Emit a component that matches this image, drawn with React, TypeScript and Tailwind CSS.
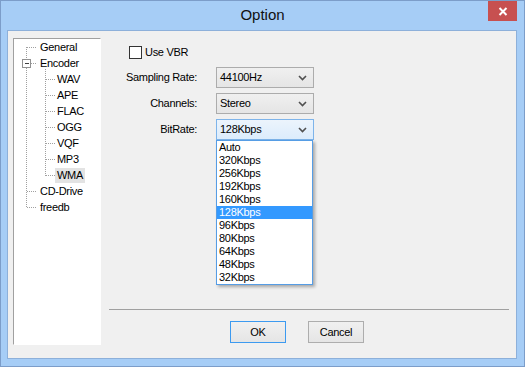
import { type ReactNode } from 'react';

const font = { fontFamily: '"Liberation Sans", Arial, sans-serif' };

type TreeRow = { label: string; level: 0 | 1; selected?: boolean };

const treeRows: TreeRow[] = [
  { label: 'General', level: 0 },
  { label: 'Encoder', level: 0 },
  { label: 'WAV', level: 1 },
  { label: 'APE', level: 1 },
  { label: 'FLAC', level: 1 },
  { label: 'OGG', level: 1 },
  { label: 'VQF', level: 1 },
  { label: 'MP3', level: 1 },
  { label: 'WMA', level: 1, selected: true },
  { label: 'CD-Drive', level: 0 },
  { label: 'freedb', level: 0 },
];

const bitRates = ['Auto', '320Kbps', '256Kbps', '192Kbps', '160Kbps', '128Kbps', '96Kbps', '80Kbps', '64Kbps', '48Kbps', '32Kbps'];

function TreeLines() {
  const dot = { stroke: '#a0a0a0', strokeDasharray: '1 1', shapeRendering: 'crispEdges' as const };
  const rootRows = [0, 9, 10];
  const childRows = [2, 3, 4, 5, 6, 7, 8];
  return (
    <svg className="pointer-events-none absolute left-0 top-0" width="86" height="200">
      <line x1="12.5" y1="8" x2="12.5" y2="20" {...dot} />
      <line x1="12.5" y1="29" x2="12.5" y2="169" {...dot} />
      {rootRows.map((r) => (
        <line key={r} x1="13" y1={r * 16 + 8.5} x2="22" y2={r * 16 + 8.5} {...dot} />
      ))}
      <line x1="17" y1="24.5" x2="22" y2="24.5" {...dot} />
      <rect x="8.5" y="20.5" width="8" height="8" fill="white" stroke="#919191" shapeRendering="crispEdges" />
      <line x1="10.5" y1="24.5" x2="15" y2="24.5" stroke="#404040" shapeRendering="crispEdges" />
      <line x1="31.5" y1="30" x2="31.5" y2="137" {...dot} />
      {childRows.map((r) => (
        <line key={r} x1="32" y1={r * 16 + 8.5} x2="41" y2={r * 16 + 8.5} {...dot} />
      ))}
    </svg>
  );
}

function Chevron() {
  return (
    <svg width="9" height="6" viewBox="0 0 9 6" className="shrink-0">
      <path d="M1 1 L4.5 4.5 L8 1" fill="none" stroke="#505050" strokeWidth="1.6" />
    </svg>
  );
}

function Combo({ value, focused, children }: { value: string; focused?: boolean; children?: ReactNode }) {
  return (
    <div
      className={`relative flex h-[21px] w-[98px] items-center justify-between border pl-[3px] pr-[6px] ${
        focused
          ? 'border-[#7eb4ea] bg-gradient-to-b from-[#ecf4fc] to-[#dcecfc]'
          : 'border-[#acacac] bg-gradient-to-b from-[#f0f0f0] to-[#e5e5e5]'
      }`}
    >
      <span>{value}</span>
      <Chevron />
      {children}
    </div>
  );
}

export default function App() {
  return (
    <div
      className="relative flex h-[367px] w-[525px] flex-col border border-[#7c9dc9] bg-[#a6cdf6] text-[11px] tracking-[-0.3px] text-black"
      style={font}
    >
      <div className="flex h-[29px] shrink-0 items-center justify-center text-[15px] tracking-normal text-[#111]">
        Option
      </div>
      <button className="absolute right-[7px] top-0 grid h-[20px] w-[29px] place-items-center bg-[#c75050]">
        <svg width="10" height="9" viewBox="0 0 10 9">
          <path d="M1.5 1 L8.5 8 M8.5 1 L1.5 8" stroke="white" strokeWidth="2" />
        </svg>
      </button>

      <div className="mb-[7px] ml-[6px] mr-[7px] flex flex-1 border border-[#8db0da] bg-[#f0f0f0]">
        <div className="ml-[5px] mt-[7px] h-[307px] w-[88px] shrink-0 border-l border-t border-r border-b border-l-[#a0a0a0] border-t-[#a0a0a0] border-r-white border-b-white bg-white">
          <div className="relative">
            <TreeLines />
            {treeRows.map((row) => (
              <div
                key={row.label}
                className={`flex h-[16px] items-center ${row.level === 0 ? 'pl-[24px]' : 'pl-[41px]'}`}
              >
                <span className={`flex h-[15px] items-center px-[2px] ${row.selected ? 'bg-[#e3e3e3]' : ''}`}>
                  {row.label}
                </span>
              </div>
            ))}
          </div>
        </div>

        <div className="flex flex-1 flex-col">
          <label className="ml-[28px] mt-[15px] flex h-[13px] items-center gap-[3px]">
            <span className="h-[13px] w-[13px] border border-[#333] bg-white" />
            <span>Use VBR</span>
          </label>

          <div className="mt-[8px] grid grid-cols-[96px_98px] items-center gap-x-[19px] gap-y-[5px]">
            <span className="text-right">Sampling Rate:</span>
            <Combo value="44100Hz" />
            <span className="text-right">Channels:</span>
            <Combo value="Stereo" />
            <span className="text-right">BitRate:</span>
            <Combo value="128Kbps" focused>
              <ul className="absolute left-[-1px] top-[20px] z-10 w-[97px] border border-[#569de5] bg-white shadow-[2px_2px_3px_rgba(0,0,0,0.3)]">
                {bitRates.map((rate) => (
                  <li
                    key={rate}
                    className={`flex h-[13px] items-center pl-[2px] ${rate === '128Kbps' ? 'bg-[#3399ff] text-white' : ''}`}
                  >
                    {rate}
                  </li>
                ))}
              </ul>
            </Combo>
          </div>

          <div className="ml-[8px] mr-[7px] mt-auto h-px bg-[#a0a0a0]" />

          <div className="mb-[15px] mt-[11px] flex gap-[22px] pl-[129px]">
            <button className="h-[22px] w-[56px] border border-[#3c9af0] bg-gradient-to-b from-[#f0f0f0] to-[#e5e5e5]">
              OK
            </button>
            <button className="h-[22px] w-[56px] border border-[#adadad] bg-gradient-to-b from-[#f0f0f0] to-[#e5e5e5]">
              Cancel
            </button>
          </div>
        </div>
      </div>
    </div>
  );
}
